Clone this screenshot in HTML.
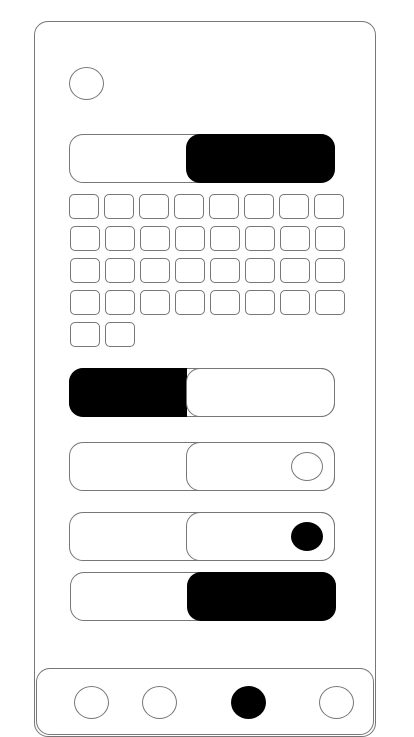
<!DOCTYPE html>
<html><head><style>
body{margin:0;width:414px;height:736px;background:#fff;position:relative;overflow:hidden}
div{position:absolute;box-sizing:border-box}
.b{border:1px solid #777}
.k{background:#000}
</style></head><body>
<div class="b" style="left:34px;top:21px;width:342px;height:716px;border-radius:14px"></div>
<div class="b" style="left:69px;top:67px;width:35px;height:33px;border-radius:50%"></div>

<div class="b" style="left:69px;top:134px;width:266px;height:49px;border-radius:14px"></div>
<div class="k" style="left:186px;top:134px;width:149px;height:49px;border-radius:14px"></div>

<div id="g"></div>

<div class="b" style="left:69px;top:368px;width:266px;height:49px;border-radius:14px"></div>
<div class="k" style="left:69px;top:368px;width:118px;height:49px;border-radius:14px 0 0 14px"></div>
<div class="b" style="left:186px;top:368px;width:149px;height:49px;border-radius:14px;border-color:#777"></div>

<div class="b" style="left:69px;top:442px;width:266px;height:49px;border-radius:14px"></div>
<div class="b" style="left:186px;top:442px;width:149px;height:49px;border-radius:14px"></div>
<div class="b" style="left:291px;top:452px;width:32px;height:29px;border-radius:50%"></div>

<div class="b" style="left:69px;top:512px;width:266px;height:49px;border-radius:14px"></div>
<div class="b" style="left:186px;top:512px;width:149px;height:49px;border-radius:14px"></div>
<div class="k" style="left:291px;top:522px;width:32px;height:29px;border-radius:50%"></div>

<div class="b" style="left:70px;top:572px;width:266px;height:49px;border-radius:14px"></div>
<div class="k" style="left:187px;top:572px;width:149px;height:49px;border-radius:14px"></div>

<div class="b" style="left:36px;top:668px;width:338px;height:67px;border-radius:14px"></div>
<div class="b" style="left:74px;top:686px;width:35px;height:33px;border-radius:50%"></div>
<div class="b" style="left:142px;top:686px;width:35px;height:33px;border-radius:50%"></div>
<div class="k" style="left:231px;top:686px;width:35px;height:33px;border-radius:50%"></div>
<div class="b" style="left:319px;top:686px;width:35px;height:33px;border-radius:50%"></div>

<div class="b" style="left:69px;top:194px;width:30px;height:25px;border-radius:5px"></div>
<div class="b" style="left:104px;top:194px;width:30px;height:25px;border-radius:5px"></div>
<div class="b" style="left:139px;top:194px;width:30px;height:25px;border-radius:5px"></div>
<div class="b" style="left:174px;top:194px;width:30px;height:25px;border-radius:5px"></div>
<div class="b" style="left:209px;top:194px;width:30px;height:25px;border-radius:5px"></div>
<div class="b" style="left:244px;top:194px;width:30px;height:25px;border-radius:5px"></div>
<div class="b" style="left:279px;top:194px;width:30px;height:25px;border-radius:5px"></div>
<div class="b" style="left:314px;top:194px;width:30px;height:25px;border-radius:5px"></div>

<div class="b" style="left:70px;top:226px;width:30px;height:25px;border-radius:5px"></div>
<div class="b" style="left:105px;top:226px;width:30px;height:25px;border-radius:5px"></div>
<div class="b" style="left:140px;top:226px;width:30px;height:25px;border-radius:5px"></div>
<div class="b" style="left:175px;top:226px;width:30px;height:25px;border-radius:5px"></div>
<div class="b" style="left:210px;top:226px;width:30px;height:25px;border-radius:5px"></div>
<div class="b" style="left:245px;top:226px;width:30px;height:25px;border-radius:5px"></div>
<div class="b" style="left:280px;top:226px;width:30px;height:25px;border-radius:5px"></div>
<div class="b" style="left:315px;top:226px;width:30px;height:25px;border-radius:5px"></div>

<div class="b" style="left:70px;top:258px;width:30px;height:25px;border-radius:5px"></div>
<div class="b" style="left:105px;top:258px;width:30px;height:25px;border-radius:5px"></div>
<div class="b" style="left:140px;top:258px;width:30px;height:25px;border-radius:5px"></div>
<div class="b" style="left:175px;top:258px;width:30px;height:25px;border-radius:5px"></div>
<div class="b" style="left:210px;top:258px;width:30px;height:25px;border-radius:5px"></div>
<div class="b" style="left:245px;top:258px;width:30px;height:25px;border-radius:5px"></div>
<div class="b" style="left:280px;top:258px;width:30px;height:25px;border-radius:5px"></div>
<div class="b" style="left:315px;top:258px;width:30px;height:25px;border-radius:5px"></div>

<div class="b" style="left:70px;top:290px;width:30px;height:25px;border-radius:5px"></div>
<div class="b" style="left:105px;top:290px;width:30px;height:25px;border-radius:5px"></div>
<div class="b" style="left:140px;top:290px;width:30px;height:25px;border-radius:5px"></div>
<div class="b" style="left:175px;top:290px;width:30px;height:25px;border-radius:5px"></div>
<div class="b" style="left:210px;top:290px;width:30px;height:25px;border-radius:5px"></div>
<div class="b" style="left:245px;top:290px;width:30px;height:25px;border-radius:5px"></div>
<div class="b" style="left:280px;top:290px;width:30px;height:25px;border-radius:5px"></div>
<div class="b" style="left:315px;top:290px;width:30px;height:25px;border-radius:5px"></div>

<div class="b" style="left:70px;top:322px;width:30px;height:25px;border-radius:5px"></div>
<div class="b" style="left:105px;top:322px;width:30px;height:25px;border-radius:5px"></div>
</body></html>
